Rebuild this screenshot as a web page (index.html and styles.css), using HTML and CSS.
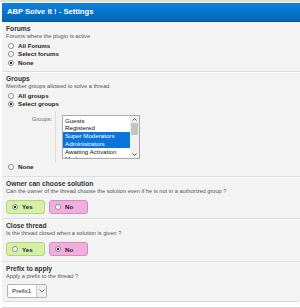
FILE: index.html
```html
<!DOCTYPE html>
<html lang="en">
<head>
    <meta charset="UTF-8">
    <title>ABP Solve It ! - Settings</title>
    <link rel="stylesheet" href="styles.css">
</head>
<body>

    <div class="panel">
        <h2 class="panel-head">ABP Solve It ! - Settings</h2>

        <!-- Forums -->
        <div class="unit">
            <div class="unit-title">Forums</div>
            <div class="unit-desc">Forums where the plugin is active</div>
            <ul class="choices">
                <li><label><input type="radio" name="forums"> All Forums</label></li>
                <li><label><input type="radio" name="forums"> Select forums</label></li>
                <li><label><input type="radio" name="forums" checked> None</label></li>
            </ul>
        </div>

        <!-- Groups -->
        <div class="unit">
            <div class="unit-title">Groups</div>
            <div class="unit-desc">Member groups allowed to solve a thread</div>
            <ul class="choices">
                <li><label><input type="radio" name="groups"> All groups</label></li>
                <li><label><input type="radio" name="groups" checked> Select groups</label></li>
            </ul>
            <div class="depend">
                <div class="depend-label">Groups:</div>
                <div class="depend-field">
                    <div class="listbox" role="listbox">
                        <div class="listbox-items">
                            <div class="option">Guests</div>
                            <div class="option">Registered</div>
                            <div class="option selected">Super Moderators</div>
                            <div class="option selected">Administrators</div>
                            <div class="option">Awaiting Activation</div>
                            <div class="option">Moderators</div>
                        </div>
                        <div class="scrollbar">
                            <svg class="arrow" width="9" height="7" viewBox="0 0 9 7"><path d="M2.5 4.5 L4.5 2.5 L6.5 4.5" fill="none" stroke="#555" stroke-width="1"/></svg>
                            <div class="thumb"></div>
                            <div class="track"></div>
                            <svg class="arrow" width="9" height="7" viewBox="0 0 9 7"><path d="M2.5 2.5 L4.5 4.5 L6.5 2.5" fill="none" stroke="#555" stroke-width="1"/></svg>
                        </div>
                    </div>
                </div>
            </div>
            <ul class="choices">
                <li><label><input type="radio" name="groups"> None</label></li>
            </ul>
        </div>

        <!-- Owner can choose solution -->
        <div class="unit boolean">
            <div class="unit-title">Owner can choose solution</div>
            <div class="unit-desc">Can the owner of the thread choose the solution even if he is not in a authorized group ?</div>
            <ul class="yesno">
                <li class="yes"><label><input type="radio" name="owner" checked> Yes</label></li>
                <li class="no"><label><input type="radio" name="owner"> No</label></li>
            </ul>
        </div>

        <!-- Close thread -->
        <div class="unit boolean">
            <div class="unit-title">Close thread</div>
            <div class="unit-desc">Is the thread closed when a solution is given ?</div>
            <ul class="yesno">
                <li class="yes"><label><input type="radio" name="close"> Yes</label></li>
                <li class="no"><label><input type="radio" name="close" checked> No</label></li>
            </ul>
        </div>

        <!-- Prefix -->
        <div class="unit last">
            <div class="unit-title">Prefix to apply</div>
            <div class="unit-desc">Apply a prefix to the thread ?</div>
            <div class="select">
                <span class="select-value">Prefix1</span>
                <span class="select-btn">
                    <svg width="6" height="4" viewBox="0 0 6 4"><path d="M0.5 0.5 L3 3 L5.5 0.5" fill="none" stroke="#777" stroke-width="1"/></svg>
                </span>
            </div>
        </div>
    </div>

    <div class="next-panel"></div>

</body>
</html>
```

FILE: styles.css
```css
body {
    margin: 0;
    padding: 0;
    background: #fff;
    font-family: 'Liberation Sans', Arial, sans-serif;
    color: #222;
    border-top: 2px solid #dedede;
}

.panel {
    margin: 1px 0 0 2px;
    background: #f3f3f3;
    border-radius: 0 0 4px 4px;
    border-bottom: 1px solid #d8d8d8;
}

.panel-head {
    margin: 0;
    height: 18px;
    line-height: 18px;
    padding-left: 5px;
    font-size: 7.6px;
    font-weight: bold;
    color: #fff;
    background: linear-gradient(#0b82df, #0767b5);
    border-bottom: 1px solid #05589c;
}

.unit {
    padding: 3px 4px 4px 4px;
    border-bottom: 1px solid #dcdcdc;
    box-shadow: 0 1px 0 #fafafa;
}

.unit.boolean {
    padding-bottom: 4.5px;
}

.unit.last {
    border-bottom: none;
    box-shadow: none;
    padding-bottom: 3px;
}

.unit-title {
    font-size: 6.7px;
    line-height: 8px;
    font-weight: bold;
    color: #333;
}

.unit-desc {
    font-size: 5.65px;
    line-height: 7px;
    color: #555;
    white-space: nowrap;
}

.choices {
    list-style: none;
    margin: 1.5px 0 0 0;
    padding: 0 0 0 2px;
}

.choices li {
    height: 8.5px;
    line-height: 8.5px;
    font-size: 6.2px;
    font-weight: bold;
    color: #222;
}

.choices label, .yesno label {
    display: flex;
    align-items: center;
    gap: 4px;
}

input[type="radio"] {
    appearance: none;
    -webkit-appearance: none;
    margin: 0;
    width: 6px;
    height: 6px;
    border: 1px solid #8c8c8c;
    border-radius: 50%;
    background: #fff;
    box-sizing: border-box;
}

input[type="radio"]:checked {
    background: radial-gradient(circle, #333 0, #333 1.3px, #fff 1.6px);
}

.depend {
    display: flex;
    margin: 2px 0 0 0;
}

.depend-label {
    width: 46px;
    text-align: right;
    padding: 5px 3px 0 0;
    font-size: 5.6px;
    color: #666;
    border-right: 1px solid #dcdcdc;
}

.depend-field {
    padding: 4px 0 3px 6px;
}

.listbox {
    display: flex;
    width: 78px;
    height: 44px;
    border: 1px solid #a8a8a8;
    background: #fff;
    box-sizing: border-box;
    overflow: hidden;
}

.listbox-items {
    flex: 1;
    padding-top: 1px;
}

.option {
    height: 7.8px;
    line-height: 7.8px;
    padding-left: 2px;
    font-size: 6.2px;
    color: #111;
    white-space: nowrap;
}

.option.selected {
    background: #0a74da;
    color: #fff;
}

.scrollbar {
    width: 9px;
    display: flex;
    flex-direction: column;
    background: #f0f0f0;
}

.arrow {
    display: block;
    flex: none;
}

.thumb {
    height: 12px;
    margin: 0 1px;
    background: #c4c4c4;
}

.track {
    flex: 1;
}

.yesno {
    list-style: none;
    display: flex;
    gap: 4px;
    margin: 5px 0 0 0;
    padding: 0;
}

.yesno li {
    width: 39px;
    height: 14px;
    box-sizing: border-box;
    border: 1px solid;
    border-radius: 3px;
    padding-left: 5px;
    font-size: 6.2px;
    font-weight: bold;
    color: #222;
}

.yesno label {
    height: 100%;
}

.yesno .yes {
    background: #d5efa8;
    border-color: #b2d57d;
}

.yesno .no {
    background: #f0aedd;
    border-color: #d58cc4;
}

.select {
    display: flex;
    width: 40px;
    height: 14px;
    margin: 4px 0 0 1px;
    box-sizing: border-box;
    border: 1px solid #b4b4b4;
    border-radius: 2px;
    background: #fff;
}

.select-value {
    flex: 1;
    padding-left: 4px;
    line-height: 12px;
    font-size: 6.2px;
    color: #222;
}

.select-btn {
    width: 9px;
    display: flex;
    align-items: center;
    justify-content: center;
    background: #eee;
    border-left: 1px solid #ccc;
}

.next-panel {
    margin: 5px 0 0 2px;
    height: 20px;
    border-top: 1px solid #d8d8d8;
    background: #f6f6f6;
}
```
